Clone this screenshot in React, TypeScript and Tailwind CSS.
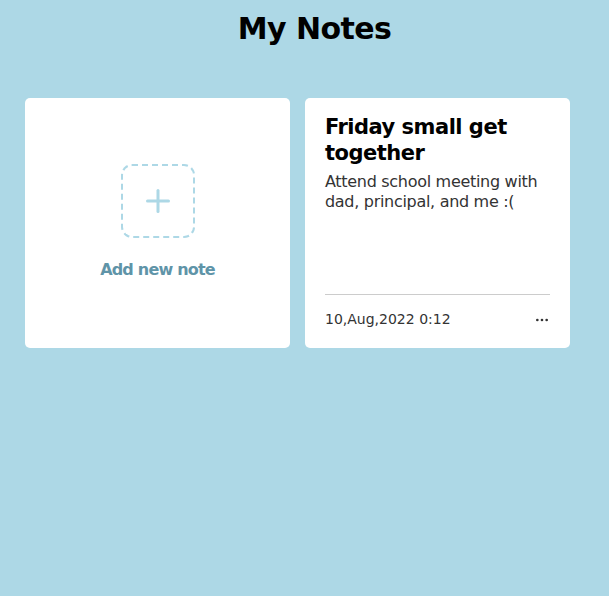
import { Plus, MoreHorizontal } from 'lucide-react';

export default function App() {
  return (
    <div className="min-h-screen bg-[#add8e6] font-['DejaVu_Sans',sans-serif]">
      <h1 className="pt-[10px] pl-[20px] text-center text-[30px] font-bold leading-[38px] tracking-[-0.6px] text-black">My Notes</h1>
      <div className="mt-[50px] grid grid-cols-[265px_265px] gap-[15px] px-[25px]">
        <div className="flex h-[250px] flex-col items-center justify-center rounded-[5px] bg-white">
          <div className="flex h-[74px] w-[74px] items-center justify-center rounded-[11px] border-2 border-dashed border-[#add8e6]">
            <Plus size={36} strokeWidth={2} className="text-[#add8e6]" />
          </div>
          <span className="mt-[20px] text-[16px] font-bold tracking-[-0.8px] text-[#5f94a8]">Add new note</span>
        </div>
        <div className="flex h-[250px] flex-col rounded-[5px] bg-white px-[20px] pt-[16px] pb-[18px]">
          <h2 className="text-[21px] font-bold leading-[26px] tracking-[-0.5px] text-black">Friday small get together</h2>
          <p className="mt-[6px] text-[16px] leading-[20px] tracking-[-0.3px] text-[#333]">Attend school meeting with dad, principal, and me :(</p>
          <div className="mt-auto flex items-center justify-between border-t border-[#ccc] pt-[14px]">
            <span className="text-[14px] text-[#333]">10,Aug,2022 0:12</span>
            <MoreHorizontal size={16} className="text-[#333]" />
          </div>
        </div>
      </div>
    </div>
  );
}
